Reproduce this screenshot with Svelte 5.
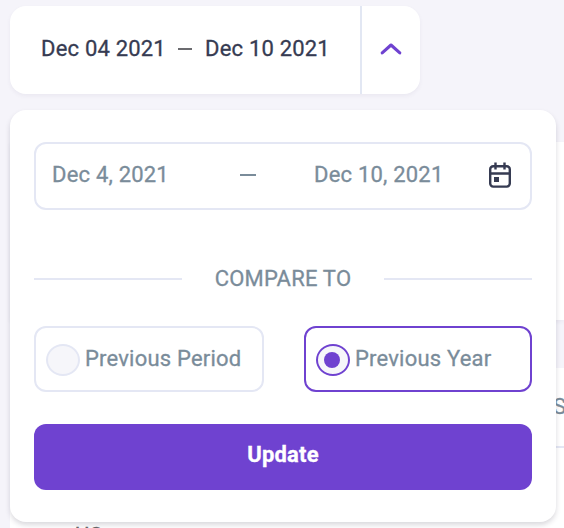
<script>
  let compare = $state('year');
  const options = [
    { id: 'period', label: 'Previous Period' },
    { id: 'year', label: 'Previous Year' }
  ];
</script>

<div class="page">
  <div class="backdrop">
    <div class="block first"></div>
    <div class="block second">
      <div class="head">S</div>
      <div class="row">US</div>
    </div>
  </div>

  <div class="picker">
    <div class="summary">
      <div class="range"><span>Dec 04 2021</span><i></i><span>Dec 10 2021</span></div>
      <button class="toggle" aria-label="Toggle">
        <svg width="22" height="14" viewBox="0 0 22 14"><path d="M2.200 10.900 11 3l8.800 7.900" /></svg>
      </button>
    </div>

    <div class="panel">
      <div class="input">
        <span class="from">Dec 4, 2021</span>
        <i></i>
        <span class="to">Dec 10, 2021</span>
        <svg width="22" height="26" viewBox="0 0 22 26">
          <rect x="1.200" y="4.200" width="19.600" height="20.400" rx="3" />
          <path d="M1.200 11.500h19.600M6.500 .5v7M15.500 .5v7" />
          <path class="fill" d="M5 15h5v5H5z" />
        </svg>
      </div>

      <div class="divider"><hr /><span>COMPARE TO</span><hr /></div>

      <div class="options">
        {#each options as o}
          <button class="option {o.id}" class:on={compare === o.id} onclick={() => (compare = o.id)}>
            <span class="radio"><b></b></span>
            <span class="label">{o.label}</span>
          </button>
        {/each}
      </div>

      <button class="update">Update</button>
    </div>
  </div>
</div>

<style>
  * { box-sizing: border-box; }
  button { font: inherit; letter-spacing: inherit; color: inherit; margin: 0; padding: 0; border: 0; background: none; cursor: pointer; }
  svg { flex: none; display: block; fill: none; }
  .page {
    position: relative;
    width: 564px;
    height: 528px;
    overflow: hidden;
    background: #f5f4fa;
    font: 400 22px/26px Roboto, sans-serif;
    letter-spacing: .2px;
    -webkit-text-stroke: .3px currentColor;
    color: #7a8c9a;
    white-space: nowrap;
  }
  .backdrop { padding: 142px 0 0 10px; }
  .block { background: #fff; }
  .first { height: 178px; box-shadow: 0 2px 4px rgba(60, 50, 110, .06); }
  .second { height: 160px; margin-top: 48px; }
  .head { height: 80px; padding: 26px 0 0 543px; border-bottom: 2px solid #e4e7f4; }
  .row { padding: 75px 0 0 65px; color: #666; }
  .picker { position: absolute; top: 6px; left: 10px; width: 546px; }
  .summary {
    display: flex;
    width: 410px;
    height: 88px;
    border-radius: 16px;
    background: #fff;
    box-shadow: 0 2px 4px rgba(60, 50, 110, .06);
    color: #363b52;
  }
  .range { display: flex; align-items: center; width: 350px; padding: 0 0 2px 31px; }
  .range span { width: 124px; }
  .range i { width: 14px; height: 2px; margin: 0 13px; background: #6b6b6f; }
  .toggle { display: flex; align-items: center; justify-content: center; width: 60px; border-left: 2px solid #e2e7f3; }
  .toggle svg { stroke: #6f42d0; stroke-width: 3.100; stroke-linecap: round; stroke-linejoin: round; margin-top: -3px; }
  .panel {
    height: 412px;
    margin-top: 16px;
    padding: 32px 24px;
    border-radius: 16px;
    background: #fff;
    box-shadow: 0 3px 5px rgba(40, 35, 60, .17);
  }
  .input { display: flex; align-items: center; height: 68px; padding: 0 19px 0 16px; border: 2px solid #e4e7f4; border-radius: 12px; }
  .from, .to { margin-top: -3px; }
  .from { width: 188px; }
  .to { width: 175px; }
  .input i { width: 16px; height: 2px; margin: 0 58px 2px 0; background: #7a8c9a; }
  .input svg { stroke: #363b52; stroke-width: 2.400; margin-top: -2px; -webkit-text-stroke: 0; }
  .input .fill { fill: #363b52; stroke: none; }
  .divider { display: flex; align-items: center; justify-content: space-between; height: 26px; margin-top: 56px; }
  .divider hr { width: 148px; height: 2px; margin: 0; border: 0; background: #e4e7f4; }
  .options { display: flex; justify-content: space-between; margin-top: 34px; }
  .option { display: flex; align-items: center; height: 66px; padding-left: 10px; border: 2px solid #e4e7f4; border-radius: 12px; }
  .period { width: 230px; }
  .year { width: 228px; }
  .radio { display: flex; align-items: center; width: 34px; height: 32px; padding-left: 6px; margin-top: 2px; border: 2px solid #e4e7f4; border-radius: 50%; background: #f6f6fa; }
  .on, .on .radio { border-color: #6f42d0; }
  .radio b { width: 16px; height: 16px; border-radius: 50%; }
  .on b { background: #6f42d0; }
  .label { margin: 0 0 0 5px; }
  .update { display: block; width: 498px; height: 66px; margin-top: 32px; padding-bottom: 5px; border-radius: 12px; background: #6f42d0; color: #fff; font-weight: 700; }
</style>
